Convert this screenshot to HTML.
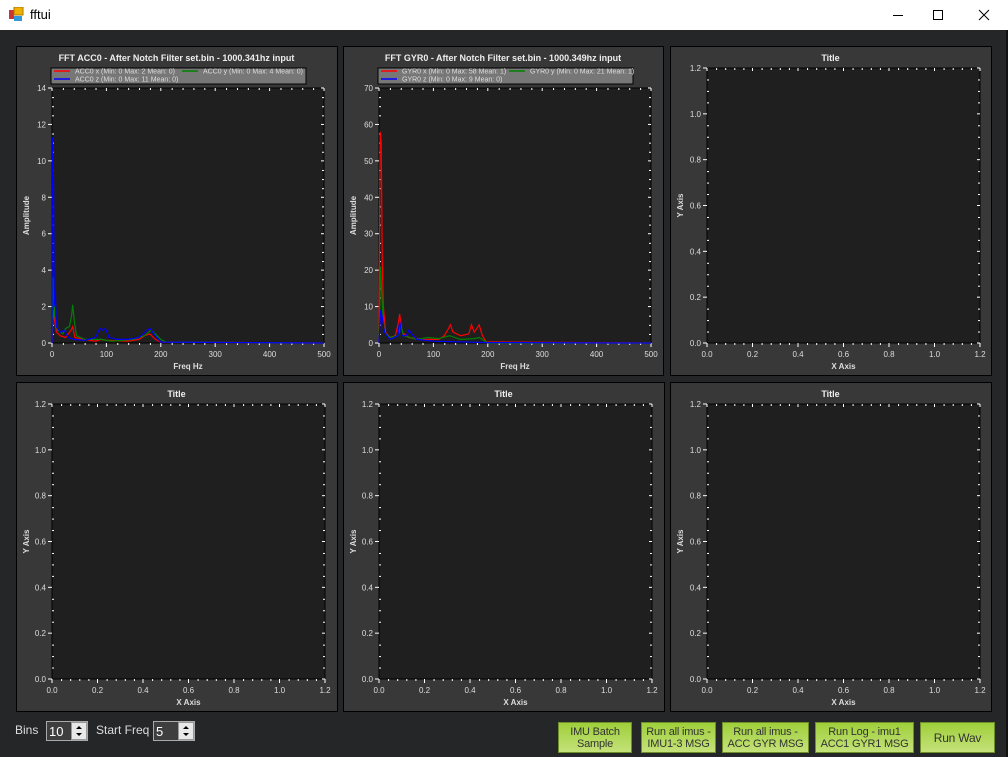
<!DOCTYPE html>
<html><head><meta charset="utf-8">
<style>
body{margin:0;width:1008px;height:757px;overflow:hidden;background:#252627;font-family:"Liberation Sans",sans-serif;}
#tb{position:absolute;left:0;top:0;width:1008px;height:30px;background:#fff;}
#tb .t{position:absolute;left:30px;top:7px;font-size:13px;color:#000;}
svg{position:absolute;left:0;top:0}
.btn{position:absolute;top:722px;height:31px;background:linear-gradient(#9fcf3a,#c4e27a);border:1px solid #6f8f2a;box-sizing:border-box;font-size:11px;color:#333;text-align:center;line-height:12px;display:flex;align-items:center;justify-content:center;white-space:nowrap;letter-spacing:-0.2px;}
.lbl{position:absolute;color:#ddd;font-size:12px;}
</style></head><body>
<div id="tb">
<svg width="16" height="16" style="left:9px;top:7px"><rect x="0" y="3" width="5" height="9" fill="#c33"/><rect x="5" y="0" width="9" height="8" fill="#f0b000" stroke="#a70" stroke-width="1"/><rect x="5" y="9" width="8" height="5" fill="#39d"/></svg>
<div class="t">fftui</div>
<svg width="1008" height="30"><line x1="893" y1="15.5" x2="903" y2="15.5" stroke="#000"/><rect x="933.5" y="10.5" width="9" height="9" fill="none" stroke="#000"/><path d="M979 10L989 20M989 10L979 20" stroke="#000"/></svg>
</div>
<svg id="s" width="1008" height="757" style="top:0" font-family="Liberation Sans, sans-serif"></svg>
<div class="lbl" style="left:15px;top:723px">Bins</div>
<svg width="1008" height="757" style="top:0" font-family="Liberation Sans, sans-serif">
<rect x="46.5" y="721.5" width="41" height="19" fill="#3e3e3e" stroke="#aaa"/>
<rect x="71.5" y="722.5" width="15" height="17" fill="#e8e8e8" stroke="#999"/>
<text x="49" y="736" fill="#fff" font-size="13">10</text>
<path d="M76 729l3-3 3 3zM76 733l3 3 3-3z" fill="#000"/>
<rect x="153.5" y="721.5" width="41" height="19" fill="#3e3e3e" stroke="#aaa"/>
<rect x="178.5" y="722.5" width="15" height="17" fill="#e8e8e8" stroke="#999"/>
<text x="156" y="736" fill="#fff" font-size="13">5</text>
<path d="M183 729l3-3 3 3zM183 733l3 3 3-3z" fill="#000"/>
</svg>
<div class="lbl" style="left:96px;top:723px">Start Freq</div>
<div class="btn" style="left:558px;width:74px">IMU Batch<br>Sample</div>
<div class="btn" style="left:641px;width:75px">Run all imus -<br>IMU1-3 MSG</div>
<div class="btn" style="left:722px;width:87px">Run all imus -<br>ACC GYR MSG</div>
<div class="btn" style="left:815px;width:99px">Run Log - imu1<br>ACC1 GYR1 MSG</div>
<div class="btn" style="left:920px;width:75px;font-size:12px">Run Wav</div>
<script>
var s=document.getElementById('s'),h='';
h+='<rect x="1006" y="30" width="2" height="727" fill="#111"/>';
function panel(px,py,pw,ph,title,X0,X1,Y0,Y1,xmax,ymax,xstep,ystep,xl,yl,fmt,legend,series){
 h+='<rect x="'+(px+.5)+'" y="'+(py+.5)+'" width="'+pw+'" height="'+ph+'" fill="#383838" stroke="#000"/>';
 h+='<text x="'+(px+pw/2)+'" y="'+(py+15)+'" fill="#eee" font-size="9" font-weight="bold" text-anchor="middle">'+title+'</text>';
 h+='<rect x="'+X0+'" y="'+Y0+'" width="'+(X1-X0)+'" height="'+(Y1-Y0)+'" fill="#1f1f1f" stroke="#000"/>';
 var n=Math.round(xmax/xstep);
 for(var i=0;i<=n;i++){var x=X0+(X1-X0)*i/n;
  h+='<line x1="'+x+'" y1="'+Y1+'" x2="'+x+'" y2="'+(Y1+4)+'" stroke="#fff"/><line x1="'+x+'" y1="'+Y0+'" x2="'+x+'" y2="'+(Y0+3)+'" stroke="#fff"/>';
  h+='<text x="'+x+'" y="'+(Y1+14)+'" fill="#ddd" font-size="8" text-anchor="middle">'+fmt(i*xstep)+'</text>';
  if(i<n)for(var k=1;k<5;k++){var xx=X0+(X1-X0)*(i+k/5)/n;h+='<rect x="'+xx+'" y="'+Y1+'" width="1" height="2" fill="#fff"/><rect x="'+xx+'" y="'+Y0+'" width="1" height="2" fill="#fff"/>';}}
 var m=Math.round(ymax/ystep);
 for(var j=0;j<=m;j++){var y=Y1-(Y1-Y0)*j/m;
  h+='<line x1="'+(X0-4)+'" y1="'+y+'" x2="'+X0+'" y2="'+y+'" stroke="#fff"/><line x1="'+(X1-3)+'" y1="'+y+'" x2="'+X1+'" y2="'+y+'" stroke="#fff"/>';
  h+='<text x="'+(X0-6)+'" y="'+(y+3)+'" fill="#ddd" font-size="8" text-anchor="end">'+fmt(j*ystep)+'</text>';
  if(j<m)for(var k=1;k<4;k++){var yy=Y1-(Y1-Y0)*(j+k/4)/m;h+='<rect x="'+X0+'" y="'+yy+'" width="2" height="1" fill="#fff"/><rect x="'+(X1-2)+'" y="'+yy+'" width="2" height="1" fill="#fff"/>';}}
 h+='<text x="'+((X0+X1)/2)+'" y="'+(Y1+26)+'" fill="#ddd" font-size="8" font-weight="bold" text-anchor="middle">'+xl+'</text>';
 var cy=(Y0+Y1)/2;h+='<text x="'+(px+13)+'" y="'+cy+'" fill="#ddd" font-size="8" font-weight="bold" text-anchor="middle" transform="rotate(-90 '+(px+13)+' '+cy+')">'+yl+'</text>';
 if(legend){h+='<rect x="'+(px+35)+'" y="'+(py+22)+'" width="255" height="16" fill="#777" stroke="#000"/>';
  legend.forEach(function(l){h+='<line x1="'+l[0]+'" y1="'+l[1]+'" x2="'+(l[0]+16)+'" y2="'+l[1]+'" stroke="'+l[2]+'" stroke-width="1.5"/><text x="'+(l[0]+21)+'" y="'+(l[1]+2.5)+'" fill="#ddd" font-size="7">'+l[3]+'</text>';});}
 if(series)series.forEach(function(sr){var p=sr[1].map(function(q){return (X0+(X1-X0)*q[0]/xmax).toFixed(1)+','+(Y1-(Y1-Y0)*q[1]/ymax).toFixed(1)}).join(' ');
  h+='<polyline points="'+p+'" fill="none" stroke="'+sr[0]+'" stroke-width="1.2"/>';});
}
var f1=function(v){return String(v)};var f2=function(v){return v.toFixed(1)};
panel(16,46,321,329,'FFT ACC0 - After Notch Filter set.bin - 1000.341hz input',52,324,88,343,500,14,100,2,'Freq Hz','Amplitude',f1,
[[54,71,'red','ACC0 x (Min: 0 Max: 2 Mean: 0)'],[182,71,'green','ACC0 y (Min: 0 Max: 4 Mean: 0)'],[54,79,'blue','ACC0 z (Min: 0 Max: 11 Mean: 0)']],
[['red',[[0,0],[2,1.8],[5,1.2],[8,.6],[15,.4],[25,.3],[30,.5],[35,.7],[38,.9],[42,.3],[60,.2],[80,.1],[90,.2],[100,.15],[140,.1],[160,.2],[170,.4],[180,.5],[190,.2],[200,.05],[500,0]]],
['green',[[0,0],[2,3.6],[5,1.5],[10,.7],[20,.5],[25,.8],[32,.9],[36,1.5],[38,2.1],[41,1.2],[45,.4],[60,.2],[90,.2],[110,.1],[150,.2],[170,.4],[182,.7],[190,.5],[200,.2],[210,.05],[500,0]]],
['blue',[[0,0],[1,11.3],[3,8.8],[4,2],[6,2.9],[8,.9],[15,.6],[22,.7],[30,.3],[40,.2],[60,.15],[80,.3],[88,.8],[93,.7],[98,.8],[105,.3],[120,.2],[140,.2],[160,.3],[175,.7],[180,.8],[190,.4],[200,.05],[500,0]]]]);
panel(343,46,320,329,'FFT GYR0 - After Notch Filter set.bin - 1000.349hz input',379,651,88,343,500,70,100,10,'Freq Hz','Amplitude',f1,
[[381,71,'red','GYR0 x (Min: 0 Max: 58 Mean: 1)'],[509,71,'green','GYR0 y (Min: 0 Max: 21 Mean: 1)'],[381,79,'blue','GYR0 z (Min: 0 Max: 9 Mean: 0)']],
[['red',[[0,0],[2,58],[4,55],[6,22],[8,10],[12,3],[20,1.5],[30,2],[35,5],[38,8],[42,3],[55,1.5],[80,1],[110,1],[120,2],[128,4],[131,5],[136,3],[150,2],[165,2.5],[170,5],[175,3],[180,4],[184,5],[190,2],[197,.3],[500,0]]],
['green',[[0,0],[3,21],[6,10],[10,3],[20,1.5],[35,2],[40,5],[45,2],[70,1],[90,1.5],[110,1.2],[130,2],[150,1],[175,1.2],[185,1.5],[195,.5],[200,0],[500,0]]],
['blue',[[0,0],[3,9],[6,7],[10,3],[20,1],[35,2],[38,6],[42,2],[50,2],[55,3.5],[60,2.5],[70,1],[100,.5],[200,.1],[500,0]]]]);
var P=[[670,46,707,980,68,343],[16,382,52,325,404,679],[343,382,379,652,404,679],[670,382,707,980,404,679]];
P.forEach(function(q){panel(q[0],q[1],321,329,'Title',q[2],q[3],q[4],q[5],1.2,1.2,.2,.2,'X Axis','Y Axis',f2,null,null);});
s.innerHTML=h;
</script>
</body></html>
